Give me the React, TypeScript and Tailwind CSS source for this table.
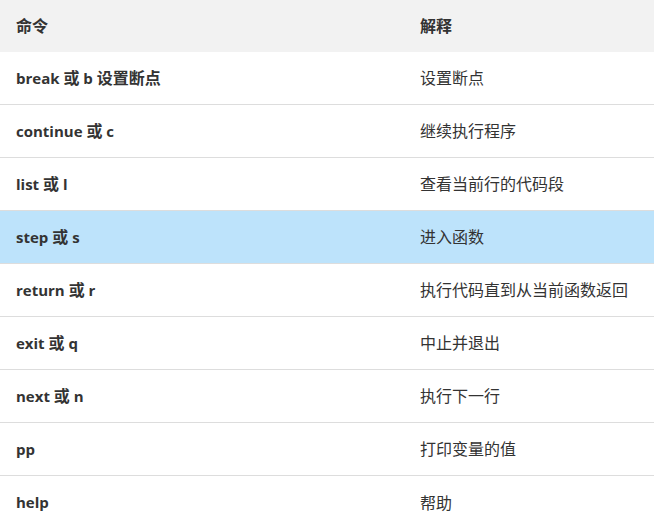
import React from "react";

const rows: [React.ReactNode, string][] = [
  [<>break <C>或</C> b <C>设置断点</C></>, "设置断点"],
  [<>continue <C>或</C> c</>, "继续执行程序"],
  [<>list <C>或</C> l</>, "查看当前行的代码段"],
  [<>step <C>或</C> s</>, "进入函数"],
  [<>return <C>或</C> r</>, "执行代码直到从当前函数返回"],
  [<>exit <C>或</C> q</>, "中止并退出"],
  [<>next <C>或</C> n</>, "执行下一行"],
  ["pp", "打印变量的值"],
  ["help", "帮助"],
];

function C({ children }: { children: React.ReactNode }) {
  return <span className="text-[16px]">{children}</span>;
}

export default function App() {
  return (
    <div
      className="w-[654px] h-[527px] bg-white text-[#333] text-[15px] overflow-hidden"
      style={{ fontFamily: '"Open Sans", "Noto Sans CJK SC", sans-serif' }}
    >
      <div className="flex items-center h-[52px] bg-[#f2f2f2] font-bold text-[16px]">
        <div className="w-[404px] pl-4">命令</div>
        <div className="pl-4">解释</div>
      </div>
      {rows.map(([a, b], i) => (
        <div
          key={i}
          className={
            "flex items-center h-[53px] " +
            (i < rows.length - 1 ? "border-b border-[#dddddd] " : "") +
            (i === 3 ? "bg-[#bde3fb]" : "bg-white")
          }
        >
          <div className="w-[404px] pl-4 font-bold">{a}</div>
          <div className="pl-4 text-[16px]">{b}</div>
        </div>
      ))}
    </div>
  );
}
